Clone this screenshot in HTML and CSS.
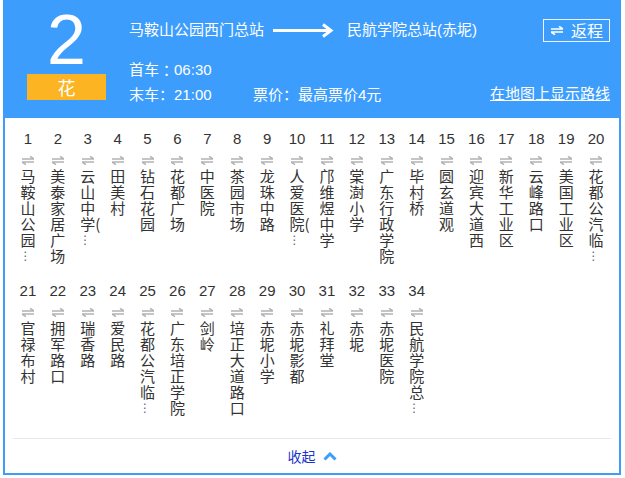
FILE: index.html
```html
<!DOCTYPE html>
<html lang="zh">
<head>
<meta charset="utf-8">
<title>2 花</title>
<link rel="stylesheet" href="styles.css">
</head>
<body>
<div class="card">
  <header class="head">
    <div class="badge">
      <div class="num">2</div>
      <div class="tag">花</div>
    </div>
    <div class="info">
      <div class="route">
        <span class="stn">马鞍山公园西门总站</span>
        <svg class="arrow" width="61" height="15" viewBox="0 0 61 15"><path d="M0 7.5H57" stroke="#fff" stroke-width="3" fill="none"/><polyline points="50,1.5 58,7.5 50,13.5" stroke="#fff" stroke-width="3" fill="none"/></svg>
        <span class="stn">民航学院总站(赤坭)</span>
        <button class="back"><svg width="12" height="9" viewBox="0 0 12 9"><path d="M0 3H12L8 0.3M12 6H0L4 8.7" stroke="#fff" stroke-width="1.6" fill="none"/></svg><span>返程</span></button>
      </div>
      <div class="line first">首车<span class="colon">：</span>06:30</div>
      <div class="line">
        <span class="last">末车<span class="colon">：</span>21:00</span>
        <span>票价<span class="colon">：</span>最高票价4元</span>
        <a class="map" href="#">在地图上显示路线</a>
      </div>
    </div>
  </header>

  <main class="stops">
    <div class="stop"><div class="n">1</div><svg class="sw" width="12" height="9" viewBox="0 0 12 9"><path d="M0 3H12L8 0.3M12 6H0L4 8.7" stroke="#b3b3b3" stroke-width="1.5" fill="none"/></svg><div class="name">马鞍山公园<span class="more">⋮</span></div></div>
    <div class="stop"><div class="n">2</div><svg class="sw" width="12" height="9" viewBox="0 0 12 9"><path d="M0 3H12L8 0.3M12 6H0L4 8.7" stroke="#b3b3b3" stroke-width="1.5" fill="none"/></svg><div class="name">美泰家居广场</div></div>
    <div class="stop"><div class="n">3</div><svg class="sw" width="12" height="9" viewBox="0 0 12 9"><path d="M0 3H12L8 0.3M12 6H0L4 8.7" stroke="#b3b3b3" stroke-width="1.5" fill="none"/></svg><div class="name">云山中学(<span class="more">⋮</span></div></div>
    <div class="stop"><div class="n">4</div><svg class="sw" width="12" height="9" viewBox="0 0 12 9"><path d="M0 3H12L8 0.3M12 6H0L4 8.7" stroke="#b3b3b3" stroke-width="1.5" fill="none"/></svg><div class="name">田美村</div></div>
    <div class="stop"><div class="n">5</div><svg class="sw" width="12" height="9" viewBox="0 0 12 9"><path d="M0 3H12L8 0.3M12 6H0L4 8.7" stroke="#b3b3b3" stroke-width="1.5" fill="none"/></svg><div class="name">钻石花园</div></div>
    <div class="stop"><div class="n">6</div><svg class="sw" width="12" height="9" viewBox="0 0 12 9"><path d="M0 3H12L8 0.3M12 6H0L4 8.7" stroke="#b3b3b3" stroke-width="1.5" fill="none"/></svg><div class="name">花都广场</div></div>
    <div class="stop"><div class="n">7</div><svg class="sw" width="12" height="9" viewBox="0 0 12 9"><path d="M0 3H12L8 0.3M12 6H0L4 8.7" stroke="#b3b3b3" stroke-width="1.5" fill="none"/></svg><div class="name">中医院</div></div>
    <div class="stop"><div class="n">8</div><svg class="sw" width="12" height="9" viewBox="0 0 12 9"><path d="M0 3H12L8 0.3M12 6H0L4 8.7" stroke="#b3b3b3" stroke-width="1.5" fill="none"/></svg><div class="name">茶园市场</div></div>
    <div class="stop"><div class="n">9</div><svg class="sw" width="12" height="9" viewBox="0 0 12 9"><path d="M0 3H12L8 0.3M12 6H0L4 8.7" stroke="#b3b3b3" stroke-width="1.5" fill="none"/></svg><div class="name">龙珠中路</div></div>
    <div class="stop"><div class="n">10</div><svg class="sw" width="12" height="9" viewBox="0 0 12 9"><path d="M0 3H12L8 0.3M12 6H0L4 8.7" stroke="#b3b3b3" stroke-width="1.5" fill="none"/></svg><div class="name">人爱医院(<span class="more">⋮</span></div></div>
    <div class="stop"><div class="n">11</div><svg class="sw" width="12" height="9" viewBox="0 0 12 9"><path d="M0 3H12L8 0.3M12 6H0L4 8.7" stroke="#b3b3b3" stroke-width="1.5" fill="none"/></svg><div class="name">邝维煜中学</div></div>
    <div class="stop"><div class="n">12</div><svg class="sw" width="12" height="9" viewBox="0 0 12 9"><path d="M0 3H12L8 0.3M12 6H0L4 8.7" stroke="#b3b3b3" stroke-width="1.5" fill="none"/></svg><div class="name">棠澍小学</div></div>
    <div class="stop"><div class="n">13</div><svg class="sw" width="12" height="9" viewBox="0 0 12 9"><path d="M0 3H12L8 0.3M12 6H0L4 8.7" stroke="#b3b3b3" stroke-width="1.5" fill="none"/></svg><div class="name">广东行政学院</div></div>
    <div class="stop"><div class="n">14</div><svg class="sw" width="12" height="9" viewBox="0 0 12 9"><path d="M0 3H12L8 0.3M12 6H0L4 8.7" stroke="#b3b3b3" stroke-width="1.5" fill="none"/></svg><div class="name">毕村桥</div></div>
    <div class="stop"><div class="n">15</div><svg class="sw" width="12" height="9" viewBox="0 0 12 9"><path d="M0 3H12L8 0.3M12 6H0L4 8.7" stroke="#b3b3b3" stroke-width="1.5" fill="none"/></svg><div class="name">圆玄道观</div></div>
    <div class="stop"><div class="n">16</div><svg class="sw" width="12" height="9" viewBox="0 0 12 9"><path d="M0 3H12L8 0.3M12 6H0L4 8.7" stroke="#b3b3b3" stroke-width="1.5" fill="none"/></svg><div class="name">迎宾大道西</div></div>
    <div class="stop"><div class="n">17</div><svg class="sw" width="12" height="9" viewBox="0 0 12 9"><path d="M0 3H12L8 0.3M12 6H0L4 8.7" stroke="#b3b3b3" stroke-width="1.5" fill="none"/></svg><div class="name">新华工业区</div></div>
    <div class="stop"><div class="n">18</div><svg class="sw" width="12" height="9" viewBox="0 0 12 9"><path d="M0 3H12L8 0.3M12 6H0L4 8.7" stroke="#b3b3b3" stroke-width="1.5" fill="none"/></svg><div class="name">云峰路口</div></div>
    <div class="stop"><div class="n">19</div><svg class="sw" width="12" height="9" viewBox="0 0 12 9"><path d="M0 3H12L8 0.3M12 6H0L4 8.7" stroke="#b3b3b3" stroke-width="1.5" fill="none"/></svg><div class="name">美国工业区</div></div>
    <div class="stop"><div class="n">20</div><svg class="sw" width="12" height="9" viewBox="0 0 12 9"><path d="M0 3H12L8 0.3M12 6H0L4 8.7" stroke="#b3b3b3" stroke-width="1.5" fill="none"/></svg><div class="name">花都公汽临<span class="more">⋮</span></div></div>
    <div class="stop"><div class="n">21</div><svg class="sw" width="12" height="9" viewBox="0 0 12 9"><path d="M0 3H12L8 0.3M12 6H0L4 8.7" stroke="#b3b3b3" stroke-width="1.5" fill="none"/></svg><div class="name">官禄布村</div></div>
    <div class="stop"><div class="n">22</div><svg class="sw" width="12" height="9" viewBox="0 0 12 9"><path d="M0 3H12L8 0.3M12 6H0L4 8.7" stroke="#b3b3b3" stroke-width="1.5" fill="none"/></svg><div class="name">拥军路口</div></div>
    <div class="stop"><div class="n">23</div><svg class="sw" width="12" height="9" viewBox="0 0 12 9"><path d="M0 3H12L8 0.3M12 6H0L4 8.7" stroke="#b3b3b3" stroke-width="1.5" fill="none"/></svg><div class="name">瑞香路</div></div>
    <div class="stop"><div class="n">24</div><svg class="sw" width="12" height="9" viewBox="0 0 12 9"><path d="M0 3H12L8 0.3M12 6H0L4 8.7" stroke="#b3b3b3" stroke-width="1.5" fill="none"/></svg><div class="name">爱民路</div></div>
    <div class="stop"><div class="n">25</div><svg class="sw" width="12" height="9" viewBox="0 0 12 9"><path d="M0 3H12L8 0.3M12 6H0L4 8.7" stroke="#b3b3b3" stroke-width="1.5" fill="none"/></svg><div class="name">花都公汽临<span class="more">⋮</span></div></div>
    <div class="stop"><div class="n">26</div><svg class="sw" width="12" height="9" viewBox="0 0 12 9"><path d="M0 3H12L8 0.3M12 6H0L4 8.7" stroke="#b3b3b3" stroke-width="1.5" fill="none"/></svg><div class="name">广东培正学院</div></div>
    <div class="stop"><div class="n">27</div><svg class="sw" width="12" height="9" viewBox="0 0 12 9"><path d="M0 3H12L8 0.3M12 6H0L4 8.7" stroke="#b3b3b3" stroke-width="1.5" fill="none"/></svg><div class="name">剑岭</div></div>
    <div class="stop"><div class="n">28</div><svg class="sw" width="12" height="9" viewBox="0 0 12 9"><path d="M0 3H12L8 0.3M12 6H0L4 8.7" stroke="#b3b3b3" stroke-width="1.5" fill="none"/></svg><div class="name">培正大道路口</div></div>
    <div class="stop"><div class="n">29</div><svg class="sw" width="12" height="9" viewBox="0 0 12 9"><path d="M0 3H12L8 0.3M12 6H0L4 8.7" stroke="#b3b3b3" stroke-width="1.5" fill="none"/></svg><div class="name">赤坭小学</div></div>
    <div class="stop"><div class="n">30</div><svg class="sw" width="12" height="9" viewBox="0 0 12 9"><path d="M0 3H12L8 0.3M12 6H0L4 8.7" stroke="#b3b3b3" stroke-width="1.5" fill="none"/></svg><div class="name">赤坭影都</div></div>
    <div class="stop"><div class="n">31</div><svg class="sw" width="12" height="9" viewBox="0 0 12 9"><path d="M0 3H12L8 0.3M12 6H0L4 8.7" stroke="#b3b3b3" stroke-width="1.5" fill="none"/></svg><div class="name">礼拜堂</div></div>
    <div class="stop"><div class="n">32</div><svg class="sw" width="12" height="9" viewBox="0 0 12 9"><path d="M0 3H12L8 0.3M12 6H0L4 8.7" stroke="#b3b3b3" stroke-width="1.5" fill="none"/></svg><div class="name">赤坭</div></div>
    <div class="stop"><div class="n">33</div><svg class="sw" width="12" height="9" viewBox="0 0 12 9"><path d="M0 3H12L8 0.3M12 6H0L4 8.7" stroke="#b3b3b3" stroke-width="1.5" fill="none"/></svg><div class="name">赤坭医院</div></div>
    <div class="stop"><div class="n">34</div><svg class="sw" width="12" height="9" viewBox="0 0 12 9"><path d="M0 3H12L8 0.3M12 6H0L4 8.7" stroke="#b3b3b3" stroke-width="1.5" fill="none"/></svg><div class="name">民航学院总<span class="more">⋮</span></div></div>
  </main>

  <div class="divider"></div>
  <footer class="foot">
    <a class="fold" href="#">收起</a>
    <svg width="14" height="9" viewBox="0 0 14 9"><polyline points="1.5,7.5 7,2 12.5,7.5" stroke="#3c9dfd" stroke-width="3" fill="none"/></svg>
  </footer>
</div>
</body>
</html>
```

FILE: styles.css
```css
html, body {
  margin: 0;
  padding: 0;
  background: #fff;
}

body {
  font-family: "Liberation Sans", "Noto Sans CJK SC", sans-serif;
  color: #333;
}

.card {
  margin: 0 4px 0 3px;
  border: 2px solid #3c9dfd;
  height: 475px;
  box-sizing: border-box;
}

.head {
  display: flex;
  height: 116px;
  box-sizing: border-box;
  padding: 4px 9px 0 22px;
  background: #3c9dfd;
  color: #fff;
}

.badge {
  width: 79px;
  flex: none;
  display: flex;
  flex-direction: column;
}

.num {
  font-family: "Liberation Sans", sans-serif;
  font-size: 70px;
  line-height: 68px;
  height: 68px;
  text-align: center;
}

.tag {
  height: 26px;
  background: #fdb422;
  font-family: "Noto Sans CJK SC", sans-serif;
  font-size: 18px;
  line-height: 26px;
  text-align: center;
}

.info {
  flex: 1;
  margin-left: 23px;
  padding-top: 12px;
  font-size: 15px;
}

.route {
  display: flex;
  align-items: center;
  height: 24px;
}

.stn {
  line-height: 24px;
  white-space: nowrap;
}

.arrow {
  margin: 0 13px 0 9px;
  flex: none;
}

.back {
  margin-left: auto;
  height: 23px;
  box-sizing: border-box;
  display: flex;
  align-items: center;
  gap: 8px;
  padding: 0 6px 0 7px;
  border: 1px solid rgba(255, 255, 255, 0.9);
  background: transparent;
  color: #fff;
  font-family: "Noto Sans CJK SC", sans-serif;
  font-size: 16px;
  line-height: 21px;
}

.line {
  display: flex;
  height: 24px;
  line-height: 24px;
  white-space: nowrap;
}

.line.first {
  margin-top: 16px;
}

.colon {
  font-family: "Noto Sans CJK TC", sans-serif;
}

.last {
  width: 124px;
}

.map {
  margin-left: auto;
  color: #fff;
  text-decoration: underline;
}

.stops {
  display: grid;
  grid-template-columns: repeat(20, 1fr);
  row-gap: 17px;
  padding: 11px 8px 22px;
}

.stop {
  height: 135px;
  display: flex;
  flex-direction: column;
  align-items: center;
}

.n {
  font-size: 15px;
  line-height: 19px;
  color: #333;
  text-align: center;
}

.sw {
  display: block;
  margin-top: 8px;
}

.name {
  align-self: flex-start;
  margin-top: 3px;
  margin-left: calc(50% - 7.5px);
  width: 22px;
  font-family: "Noto Sans CJK SC", sans-serif;
  font-size: 15px;
  line-height: 16px;
  color: #333;
  word-break: break-all;
}

.more {
  display: block;
  margin-left: -1px;
  font-family: "DejaVu Sans", sans-serif;
  font-size: 12px;
  line-height: 16px;
  color: #666;
}

.divider {
  margin: 0 8px;
  border-top: 1px solid #e8e8e8;
}

.foot {
  height: 34px;
  display: flex;
  align-items: center;
  justify-content: center;
  gap: 7px;
}

.fold {
  font-family: "Noto Sans CJK SC", sans-serif;
  font-size: 14px;
  line-height: 20px;
  color: #1834cc;
  text-decoration: none;
}
```
